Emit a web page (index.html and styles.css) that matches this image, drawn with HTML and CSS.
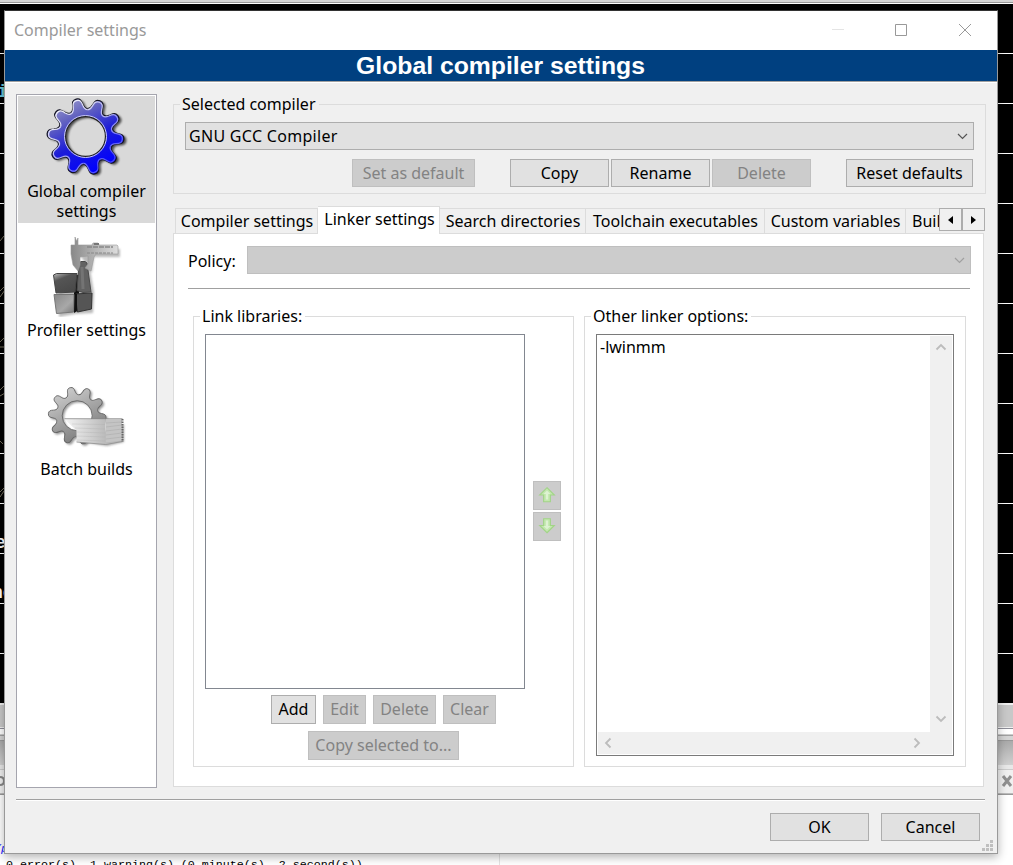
FILE: index.html
```html
<!DOCTYPE html>
<html lang="en">
<head>
<meta charset="utf-8">
<title>Compiler settings</title>
<link rel="stylesheet" href="styles.css">
</head>
<body>
<div class="desktop">
  <div class="editor-edge"></div>
  <div class="console">
    <span class="frag frag-cyan">i</span>
    <span class="frag frag-e">e</span>
    <span class="frag frag-c">nc</span>
    <svg class="scribble" width="5" height="500" viewBox="0 0 5 500" fill="none" stroke="#77715f"><path d="M0 37l4-5M0 87l5-5M0 93l5-7M0 138l4-4M0 143h4M0 186l5-5M0 192l5-3M0 237l3 3M0 288l4-4M0 293l4-6"/></svg>
  </div>
  <div class="pane-scroll"></div>
  <div class="pane-gap"></div>
  <div class="pane-caption"></div>
  <div class="pane-tabs"><svg width="5" height="12" viewBox="0 0 5 12"><path d="M0 2q4 0 4 4t-4 4" fill="none" stroke="#888" stroke-width="2"/></svg><svg width="12" height="12" viewBox="0 0 12 12"><path d="M2 1l8 10M10 1L2 11" stroke="#909090" stroke-width="3"/></svg></div>
  <div class="log">
    <div class="log-cmd">/program.c and spaces trim plot sky</div>
    <div class="log-result">0 error(s), 1 warning(s) (0 minute(s), 2 second(s))</div>
  </div>

  <div class="dialog">
    <div class="titlebar">
      <span class="title">Compiler settings</span>
      <svg width="160" height="39" viewBox="0 0 160 39" fill="none" stroke="#999"><path d="M0 18.500h12" stroke="#e4e4e4"/><path d="M63.500 13.500h11v11h-11z"/><path d="M127 13l12 12M139 13l-12 12"/></svg>
    </div>
    <div class="banner">Global compiler settings</div>
    <div class="body">
      <div class="sidebar">
        <div class="side-item selected">
          <svg width="84" height="80" viewBox="0 0 84 80">
            <defs>
              <path id="tooth" d="M-8.650 -26.600C-6.100 -27.400 -5.600 -29.500 -5.200 -32C-4.700 -36 -4 -38.500 0 -38.500C4 -38.500 4.700 -36 5.200 -32C5.600 -29.500 6.100 -27.400 8.650 -26.600"/>
              <g id="teeth"><use href="#tooth"/><use href="#tooth" transform="rotate(36)"/><use href="#tooth" transform="rotate(72)"/><use href="#tooth" transform="rotate(108)"/><use href="#tooth" transform="rotate(144)"/><use href="#tooth" transform="rotate(180)"/><use href="#tooth" transform="rotate(216)"/><use href="#tooth" transform="rotate(252)"/><use href="#tooth" transform="rotate(288)"/><use href="#tooth" transform="rotate(324)"/></g>
              <mask id="gear" maskUnits="userSpaceOnUse" x="-42" y="-42" width="84" height="84"><g transform="rotate(-14)"><use href="#teeth" fill="#fff"/></g><circle r="28" fill="#fff"/><circle r="20" fill="#000"/></mask>
              <linearGradient id="blue" x1=".2" y1="0" x2=".65" y2=".9"><stop offset="0" stop-color="#a8a8d0"/><stop offset=".3" stop-color="#6464c0"/><stop offset=".62" stop-color="#1c1cd8"/><stop offset="1" stop-color="#0000ff"/></linearGradient>
              <linearGradient id="gray" x1="0" y1="0" x2=".5" y2="1"><stop offset="0" stop-color="#ddd"/><stop offset=".5" stop-color="#aaa"/><stop offset="1" stop-color="#777"/></linearGradient>
              <linearGradient id="rim" gradientUnits="userSpaceOnUse" x1="-30" y1="-30" x2="25" y2="30"><stop offset="0" stop-color="#fff"/><stop offset=".5" stop-color="#b0b0ee"/><stop offset="1" stop-color="#4040ff"/></linearGradient>
              <mask id="rim-shape" maskUnits="userSpaceOnUse" x="-42" y="-42" width="84" height="84"><g transform="rotate(-14) scale(.96)" fill="none" stroke="#fff" stroke-width="1.300"><use href="#teeth"/></g></mask>
              <filter id="soft" x="-20%" y="-20%" width="140%" height="140%"><feGaussianBlur stdDeviation="1.300"/></filter>
            </defs>
            <g transform="translate(42 40)" filter="url(#soft)" opacity=".65"><circle r="42" fill="#000" mask="url(#gear)"/></g>
            <g transform="translate(39.500 38.500)">
              <circle r="42" fill="url(#blue)" mask="url(#gear)"/>
              <g fill="none"><g transform="rotate(-14)"><use href="#teeth" stroke="#151520" stroke-width="1.200"/></g><circle r="20" stroke="#222" stroke-width="1.300"/><circle r="21" stroke="#c8c8f4" stroke-width="1"/></g>
              <circle r="42" fill="url(#rim)" mask="url(#rim-shape)"/>
            </g>
          </svg>
          <span>Global compiler<br>settings</span>
        </div>
        <div class="side-item">
          <svg width="84" height="80" viewBox="0 0 84 80">
            <defs>
              <linearGradient id="dark" x1="0" y1="0" x2=".5" y2="1"><stop offset="0" stop-color="#bbb"/><stop offset=".35" stop-color="#555"/><stop offset="1" stop-color="#4a4a4a"/></linearGradient>
              <linearGradient id="light" x1="0" y1="0" x2="1" y2="1"><stop offset="0" stop-color="#888"/><stop offset=".6" stop-color="#a8a8a8"/><stop offset="1" stop-color="#777"/></linearGradient>
              <linearGradient id="steel" x1="0" y1="0" x2="1" y2="0"><stop offset="0" stop-color="#888"/><stop offset=".5" stop-color="#b4b4b4"/><stop offset="1" stop-color="#ddd"/></linearGradient>
            </defs>
            <path d="M13 42h20l3-10h8l4 24-1 20-18 1-16 3zM30 12h44v8H48l-2 16" fill="#777" opacity=".5" filter="url(#soft)"/>
            <path d="M28 38l5 0 0 35-5 3z" fill="#111"/>
            <path d="M7.500 38l3-1.500H31l-2 18.500-19 1z" fill="url(#dark)" stroke="#444"/>
            <path d="M8 57.500h20l-.500 17.500-17 1.500z" fill="url(#light)" stroke="#777"/>
            <path d="M29 57l17-1-.500 16-14 3z" fill="#555" stroke="#333"/><path d="M31 57l-2-1v16l2 2z" fill="#111"/>
            <path d="M33 26l2-1.500h4l2 1.500 4 29-8 .500-6-2z" fill="#626262" stroke="#4a4a4a"/><path d="M36 30l1 22" stroke="#747474" stroke-width="3"/>
            <path d="M29 0l1.500 4L32 1v7h14l1-2h5l1 2h18l1 1v8H50l-2 3-3 14-6-3 3-4V19l-8 1v8l-2 6-5-6-2-11V8h4z" fill="url(#steel)" stroke="#999" stroke-width=".6"/>
            <path d="M41 10h26" stroke="#888" stroke-width="1.500" stroke-dasharray="5 1"/><path d="M41 16h26" stroke="#888" stroke-dasharray="3 1"/><path d="M48 7h5" stroke="#777" stroke-width="2"/>
          </svg>
          <span>Profiler settings</span>
        </div>
        <div class="side-item">
          <svg width="84" height="80" viewBox="0 0 84 80">
            <defs><linearGradient id="paper" x1="0" y1="0" x2="1" y2="0"><stop offset="0" stop-color="#f4f4f4"/><stop offset="1" stop-color="#bbb"/></linearGradient></defs>
            <g transform="translate(33 41.500) scale(.75)" filter="url(#soft)" opacity=".55"><circle r="42" fill="#444" mask="url(#gear)"/></g>
            <path d="M30 65l31 5 17-4V48" fill="#555" opacity=".5" filter="url(#soft)"/>
            <g transform="translate(31.200 39.700) scale(.75)">
              <circle r="42" fill="url(#gray)" mask="url(#gear)"/>
              <g fill="none" stroke="#666" stroke-width="1.200"><g transform="rotate(-14)"><use href="#teeth"/></g><circle r="20"/></g>
            </g>
            <path d="M18.500 43h41v25.500l-29-2.500V54.500z" fill="url(#paper)"/>
            <path d="M18.500 42.700h58" stroke="#888" stroke-width=".8"/>
            <path d="M26 48l33 .500M29 52l30 1M31 56l28 1M31 60l28 1M31 64l28 1" stroke="#aaa" stroke-width=".8" opacity=".35"/>
            <path d="M59.500 43H76v22.500l-16.500 3z" fill="#c4c4c4"/>
            <path d="M60 47l16-1M60 51l16-2M60 55l16-2M60 59l16-2M60 63l16-2M60 67l16-2" stroke="#999" stroke-width=".8" opacity=".4"/>
            <path d="M76.500 43v23" stroke="#666" stroke-width="2" stroke-dasharray="1.500 1"/>
            <path d="M30.500 66l29 2.500 17-3" stroke="#888" fill="none" stroke-width=".7"/>
          </svg>
          <span>Batch builds</span>
        </div>
      </div>

      <div class="main">
        <fieldset class="group compiler-group">
          <legend>Selected compiler</legend>
          <div class="combo"><span class="value">GNU GCC Compiler</span><svg width="11" height="7" viewBox="0 0 11 7"><path d="M1 1l4.500 4.500L10 1" fill="none" stroke="#555" stroke-width="1.200"/></svg></div>
          <div class="compiler-buttons">
            <button class="btn w123" disabled>Set as default</button>
            <div class="btn-trio"><button class="btn w99">Copy</button><button class="btn w99">Rename</button><button class="btn w99" disabled>Delete</button></div>
            <button class="btn w127">Reset defaults</button>
          </div>
        </fieldset>

        <div class="tabs">
          <div class="tab t1">Compiler settings</div>
          <div class="tab active">Linker settings</div>
          <div class="tab t3">Search directories</div>
          <div class="tab t4">Toolchain executables</div>
          <div class="tab t5">Custom variables</div>
          <div class="tab t6">Buil</div>
          <div class="spin"><svg width="5" height="8" viewBox="0 0 5 8"><path d="M5 0v8L0 4z"/></svg></div>
          <div class="spin"><svg width="5" height="8" viewBox="0 0 5 8"><path d="M0 0v8l5-4z"/></svg></div>
        </div>

        <div class="panel">
          <div class="policy">
            <label>Policy:</label>
            <div class="combo off"><svg width="11" height="7" viewBox="0 0 11 7"><path d="M1 1l4.500 4.500L10 1" fill="none" stroke="#a0a0a0" stroke-width="1.200"/></svg></div>
          </div>
          <div class="rule"></div>
          <div class="columns">
            <fieldset class="group libs">
              <legend>Link libraries:</legend>
              <div class="list-row">
                <div class="listbox"></div>
                <div class="movers">
                  <button class="btn" disabled><svg width="18" height="18" viewBox="0 0 16 16"><path d="M8 1.500l6.500 6.500H11v6H5V8H1.500z" fill="#c3e8ae" stroke="#a2d488"/><path d="M8 4l3 3H9v5H7V7H5z" fill="#def2d2"/></svg></button>
                  <button class="btn" disabled><svg width="18" height="18" viewBox="0 0 16 16"><path d="M8 14l6.500-6.500H11v-6H5v6H1.500z" fill="#c3e8ae" stroke="#a2d488"/><path d="M8 11l3-3H9V3H7v5H5z" fill="#def2d2"/></svg></button>
                </div>
              </div>
              <div class="lib-buttons"><button class="btn w45">Add</button><button class="btn w43" disabled>Edit</button><button class="btn w63" disabled>Delete</button><button class="btn w53" disabled>Clear</button></div>
              <div class="lib-buttons"><button class="btn w151" disabled>Copy selected to...</button></div>
            </fieldset>
            <fieldset class="group opts">
              <legend>Other linker options:</legend>
              <div class="editbox">
                <div class="text">-lwinmm</div>
                <div class="vbar"><svg width="12" height="8" viewBox="0 0 12 8"><path d="M1.500 6.500L6 2l4.500 4.500"/></svg><svg width="12" height="8" viewBox="0 0 12 8"><path d="M1.500 1.500L6 6l4.500-4.500"/></svg></div>
                <div class="hbar"><svg width="8" height="12" viewBox="0 0 8 12"><path d="M6.500 1.500L2 6l4.500 4.500"/></svg><svg width="8" height="12" viewBox="0 0 8 12"><path d="M1.500 1.500L6 6l-4.500 4.500"/></svg></div>
              </div>
            </fieldset>
          </div>
        </div>
      </div>
    </div>
    <div class="footer">
      <button class="btn w99">OK</button><button class="btn w99">Cancel</button>
      <svg class="grip" width="11" height="11" viewBox="0 0 11 11" fill="#bfbfbf"><path d="M8 0h3v3H8zM4 4h3v3H4zM8 4h3v3H8zM0 8h3v3H0zM4 8h3v3H4zM8 8h3v3H8z"/></svg>
    </div>
  </div>
</div>
</body>
</html>
```
FILE: styles.css
```css
* { box-sizing: border-box; }
body { margin: 0; font: 16px/20px "Noto Sans", "Open Sans", sans-serif; color: #000; }
svg { display: block; flex: none; }

.desktop { position: relative; width: 1013px; height: 865px; overflow: hidden; background: #fff; display: flex; flex-direction: column; }
.desktop > div { flex: none; }
.editor-edge { height: 4px; background: linear-gradient(#d4d4d4 0 2px, #999 2px 3px, #fff 3px); }
.console { position: relative; height: 699px; background: repeating-linear-gradient(#000 0 49px, #fff 49px 50px); }
.frag { position: absolute; font: bold 18px/20px "Liberation Mono", monospace; color: #fff; }
.frag-cyan { left: -3px; top: 78px; color: #6cc8dc; }
.frag-e { left: -5px; top: 529px; }
.frag-c { left: -8px; top: 579px; }
.scribble { position: absolute; left: 0; top: 200px; }
.pane-scroll { height: 24px; background: #c8c8c8; border-top: 2px solid #f0f0f0; }
.pane-gap { height: 14px; background: linear-gradient(#f0f0f0 0 1px, #8e8e98 1px 2px, #fff 2px 7px, #ccc 7px 8px, #a0a0a0 8px 9px, #d4d4d4 9px 13px, #999 13px); }
.pane-caption { height: 24px; background: linear-gradient(#aaa, #d0d0d0); }
.pane-tabs { height: 30px; display: flex; justify-content: space-between; padding-top: 10px; background: linear-gradient(#e8e8e8 0 4px, #ccc 4px 5px, #f0f0f0 5px 28px, #bbb 28px 29px, #999 29px); }
.desktop > .log { flex: 1; font: 11.67px/16px "Liberation Mono", monospace; position: relative; padding: 46px 0 0; }
.log::after { content: ""; position: absolute; left: 499px; top: 0; bottom: 0; width: 1px; background: #e4e4e4; }
.log-cmd { color: #22f; font-style: italic; margin-left: -6px; }
.log-result { padding-left: 6px; }

.dialog { position: absolute; left: 4px; top: 10px; width: 994px; height: 844px; border: 1px solid #999; border-top-color: #333; background: #f0f0f0; box-shadow: 0 3px 9px rgba(0,0,0,.3); display: flex; flex-direction: column; }
.titlebar { height: 39px; background: #fff; display: flex; justify-content: space-between; align-items: center; padding: 0 5px 0 9px; color: #999; }
.title { padding-bottom: 2px; }
.banner { height: 33px; background: #004080; border-bottom: 1px solid #fff; box-shadow: inset 0 -1px #a0a0a0; color: #fff; text-align: center; font: bold 24.75px/31px "Liberation Sans", Arial, sans-serif; padding-right: 1px; }
.body { display: flex; gap: 16px; padding: 11px 11px 0; height: 716px; }

.sidebar { width: 141px; height: 694px; border: 1px solid #a5a5ae; background: #fff; padding: 1px; }
.side-item { height: 139px; padding-top: 2px; display: flex; flex-direction: column; align-items: center; text-align: center; }
.side-item svg { margin-left: 3px; }
.side-item span { padding-top: 3px; white-space: nowrap; }
.side-item.selected { height: 127px; background: #d9d9d9; margin-bottom: 12px; }

.main { width: 813px; }
.group { margin: 0; min-width: 0; border: 1px solid #dcdcdc; padding: 8px 11px 0; }
.group legend { height: 20px; padding: 0 3px 0 2px; margin-left: -5px; white-space: nowrap; }
.compiler-group { height: 100px; }
.combo { height: 28px; border: 1px solid #adadad; background: #e1e1e1; display: flex; align-items: center; justify-content: space-between; padding: 0 5px 0 3px; }
.combo.off { flex: 1; background: #ccc; border-color: #bfbfbf; justify-content: flex-end; }
.value { letter-spacing: .3px; }
.btn { height: 28px; padding: 0; border: 1px solid #adadad; border-radius: 0; background: #e1e1e1; color: #000; font: inherit; white-space: nowrap; }
.btn:disabled { background: #ccc; border-color: #bfbfbf; color: #838383; }
.w43 { width: 43px; } .w45 { width: 45px; } .w53 { width: 53px; } .w63 { width: 63px; }
.w99 { width: 99px; } .w123 { width: 123px; } .w127 { width: 127px; } .w151 { width: 151px; }
.compiler-buttons { display: flex; gap: 35px; padding: 9px 1px 0 0; justify-content: flex-end; }
.btn-trio { display: flex; gap: 2px; }

.tabs { display: flex; align-items: flex-end; height: 27px; margin: 12px 0 0 2px; }
.tab { height: 25px; border-top: 1px solid #dcdcdc; border-right: 1px solid #dcdcdc; text-align: center; line-height: 24px; white-space: nowrap; padding-left: 1px; }
.t1 { width: 143px; border-left: 1px solid #dcdcdc; }
.tab.active { width: 122px; height: 28px; margin-bottom: -1px; position: relative; background: #fff; line-height: 25px; padding-left: 2px; }
.t3 { width: 146px; } .t4 { width: 179px; } .t5 { width: 141px; }
.t6 { width: 33px; border-right: 0; padding-left: 6px; overflow: hidden; text-align: left; }
.spin { width: 23px; height: 23px; margin-bottom: 2px; border: 1px solid #adadad; background: #f0f0f0; display: flex; align-items: center; justify-content: center; }
.panel { width: 811px; height: 554px; border: 1px solid #dcdcdc; background: #fff; padding: 12px 12px 0 14px; }
.policy { display: flex; align-items: center; }
.policy label { width: 59px; padding-top: 2px; }
.rule { height: 1px; background: #a0a0a0; margin: 14px 1px 0 0; }
.columns { display: flex; gap: 10px; margin: 17px 0 0 5px; }
.libs { width: 381px; height: 461px; }
.opts { width: 382px; height: 461px; }
.list-row { display: flex; gap: 8px; align-items: center; }
.listbox { width: 320px; height: 355px; border: 1px solid #828790; }
.movers { display: flex; flex-direction: column; gap: 2px; margin-bottom: 2px; }
.movers .btn { width: 28px; height: 29px; padding-left: 4px; }
.lib-buttons { display: flex; justify-content: center; gap: 7px; margin-top: 6px; }
.lib-buttons + .lib-buttons { margin-top: 7px; }
.lib-buttons .btn { height: 29px; padding-bottom: 1px; }
.editbox { width: 358px; height: 422px; border: 1px solid #7a7a7a; padding: 1px; display: grid; grid-template: 396px 22px / 332px 22px; }
.text { padding: 1px 0 0 2px; }
.vbar { grid-row: 1 / 3; grid-column: 2; background: #f0f0f0; display: flex; flex-direction: column; align-items: center; justify-content: space-between; padding: 7px 1px 31px 0; }
.hbar { background: #f0f0f0; display: flex; align-items: center; justify-content: space-between; padding: 0 9px 1px 6px; }
.vbar path, .hbar path { fill: none; stroke: #bcbcbc; stroke-width: 1.800; }
.footer { position: relative; height: 54px; margin: 0 12px 0 11px; border-top: 1px solid #a0a0a0; box-shadow: inset 0 1px #fff; padding: 13px 5px 0 0; display: flex; justify-content: flex-end; gap: 12px; }
.grip { position: absolute; right: -8px; bottom: 2px; }
```
